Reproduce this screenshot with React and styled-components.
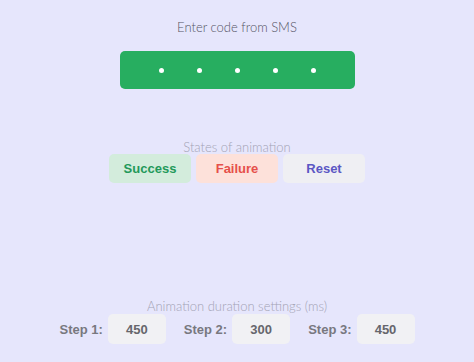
import React from 'react';
import styled, { createGlobalStyle } from 'styled-components';

const GlobalStyle = createGlobalStyle`
  html, body {
    margin: 0;
    padding: 0;
    background: #e6e6fc;
  }
  body {
    font-family: Lato, "Liberation Sans", Arial, sans-serif;
  }
`;

const boldFont = `"Liberation Sans", Arial, sans-serif`;

const Page = styled.div`
  height: 362px;
  display: flex;
  flex-direction: column;
  align-items: center;
  box-sizing: border-box;
  padding: 19px 0 18px;
`;

const Title = styled.div`
  font-size: 13px;
  font-weight: 300;
  color: #555566;
  line-height: 16px;
`;

const CodeBox = styled.div`
  margin-top: 16px;
  width: 235px;
  height: 38px;
  border-radius: 5px;
  background: #27ae60;
  display: flex;
  align-items: center;
  justify-content: center;
  gap: 33px;
`;

const Dot = styled.span`
  width: 5px;
  height: 5px;
  border-radius: 50%;
  background: #ffffff;
`;

const Caption = styled.div`
  font-size: 13px;
  font-weight: 300;
  color: #a3a3b5;
  line-height: 16px;
`;

const States = styled.div`
  margin-top: 50px;
  display: flex;
  flex-direction: column;
  align-items: center;
`;

const ButtonRow = styled.div`
  display: flex;
  gap: 5px;
  margin-top: -1px;
`;

const tones = {
  success: { bg: '#d3ecdc', fg: '#23995a' },
  failure: { bg: '#fde1da', fg: '#e6504a' },
  reset: { bg: '#efeff3', fg: '#5b57c4' },
};

const StateButton = styled.button`
  width: 82px;
  height: 29px;
  border: none;
  border-radius: 5px;
  background: ${({ tone }) => tones[tone].bg};
  color: ${({ tone }) => tones[tone].fg};
  font-family: ${boldFont};
  font-size: 13px;
  font-weight: 700;
  padding: 0;
`;

const Settings = styled.div`
  margin-top: auto;
  display: flex;
  flex-direction: column;
  align-items: center;
`;

const StepRow = styled.div`
  display: flex;
  align-items: center;
`;

const Step = styled.label`
  display: flex;
  align-items: center;
  gap: 5px;
  margin-left: ${({ first }) => (first ? '0' : '18px')};
`;

const StepLabel = styled.span`
  font-family: ${boldFont};
  font-size: 13px;
  font-weight: 700;
  color: #78787f;
`;

const StepInput = styled.div`
  width: 58px;
  height: 30px;
  border-radius: 5px;
  background: #f1f1f4;
  display: flex;
  align-items: center;
  justify-content: center;
  font-family: ${boldFont};
  font-size: 13px;
  font-weight: 700;
  color: #66666c;
`;

const steps = [
  { name: 'Step 1:', value: 450 },
  { name: 'Step 2:', value: 300 },
  { name: 'Step 3:', value: 450 },
];

export default function App() {
  return (
    <Page>
      <GlobalStyle />
      <Title>Enter code from SMS</Title>
      <CodeBox>
        {[0, 1, 2, 3, 4].map((i) => (
          <Dot key={i} />
        ))}
      </CodeBox>
      <States>
        <Caption>States of animation</Caption>
        <ButtonRow>
          <StateButton tone="success">Success</StateButton>
          <StateButton tone="failure">Failure</StateButton>
          <StateButton tone="reset">Reset</StateButton>
        </ButtonRow>
      </States>
      <Settings>
        <Caption>Animation duration settings (ms)</Caption>
        <StepRow>
          {steps.map((s, i) => (
            <Step key={s.name} first={i === 0}>
              <StepLabel>{s.name}</StepLabel>
              <StepInput>{s.value}</StepInput>
            </Step>
          ))}
        </StepRow>
      </Settings>
    </Page>
  );
}
